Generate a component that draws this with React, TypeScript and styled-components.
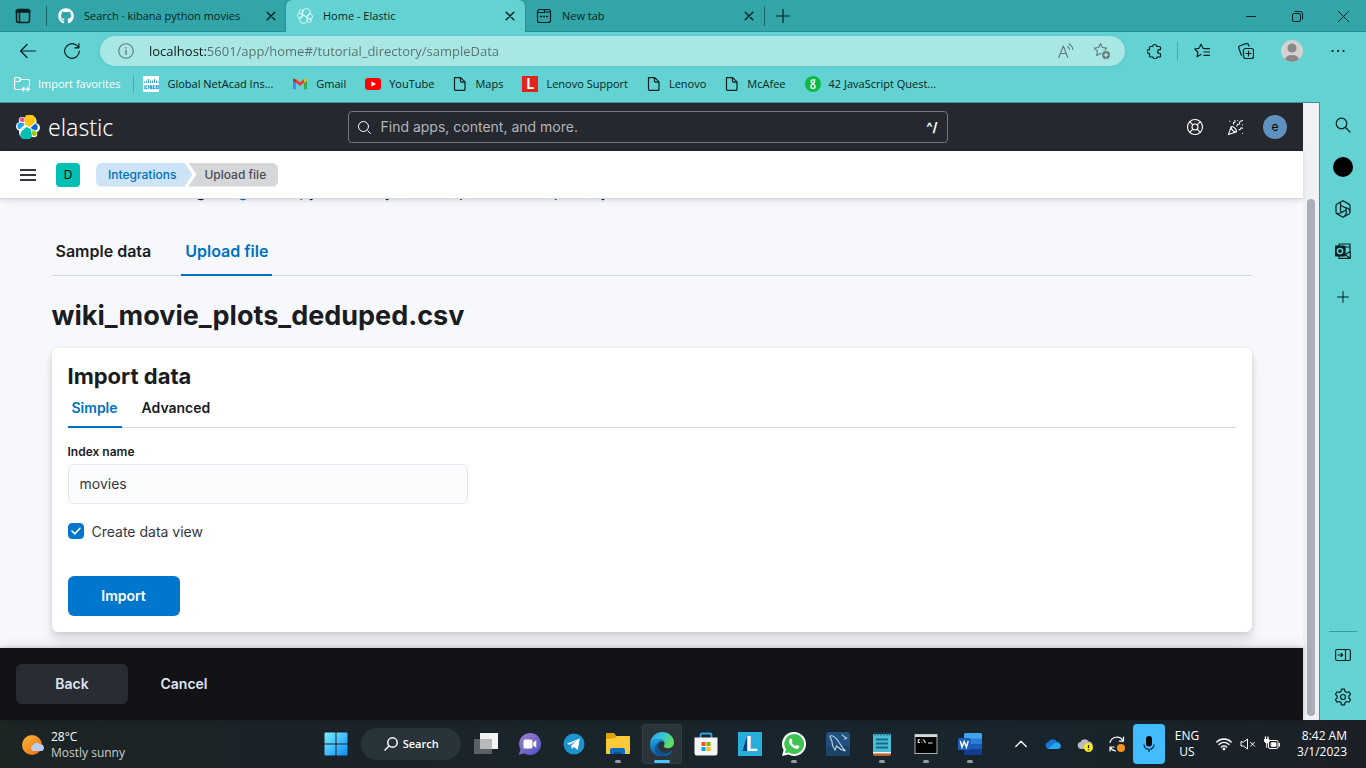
import React, { useState } from "react";
import styled, { createGlobalStyle, css } from "styled-components";
import { LifeBuoy, PartyPopper } from "lucide-react";
import { FaGithub } from "react-icons/fa";

const chromeFont = `"Open Sans", "Noto Sans", sans-serif`;
const teal = "#62d2d2";
const ink = "#0b1f20";

const GlobalStyle = createGlobalStyle`
  * { box-sizing: border-box; }
  body { margin: 0; font-family: Inter, sans-serif; background: ${teal}; }
  button, input { font: inherit; color: inherit; }
  button { border: 0; padding: 0; background: none; cursor: pointer; }
  a { color: inherit; text-decoration: none; }
  h1, h2, p, ul, ol { margin: 0; padding: 0; }
  svg { display: block; flex: none; }
`;

const Desktop = styled.div`
  min-height: 100vh;
  display: flex;
  flex-direction: column;
`;

/* ---------- browser frame ---------- */

const TabStrip = styled.div`
  height: 32px;
  display: flex;
  align-items: stretch;
  background: #31a5a8;
  box-shadow: inset 0 -1px 0 #2a8f92;
  color: ${ink};
  font: 11px/16px ${chromeFont};
`;

const TabActions = styled.button`
  width: 46px;
  display: grid;
  place-items: center;
`;

const Rule = styled.span<{ $h?: number; $color?: string; $pull?: boolean }>`
  flex: none;
  align-self: center;
  width: 1px;
  height: ${(p) => p.$h ?? 20}px;
  margin-right: ${(p) => (p.$pull ? "-10px" : 0)};
  background: ${(p) => p.$color ?? "#1c6668"};
`;

const BrowserTab = styled.div<{ $active?: boolean }>`
  flex: 0 1 239px;
  min-width: 0;
  display: flex;
  align-items: center;
  padding: 0 8px 0 11px;
  ${(p) =>
    p.$active &&
    css`
      background: ${teal};
      border-radius: 6px 6px 0 0;
      box-shadow: 0 0 2px #1c6668;
      clip-path: inset(0 -3px 0 -3px);
    `}
`;

const TabTitle = styled.button`
  flex: 1;
  min-width: 0;
  display: flex;
  align-items: center;
  gap: 10px;
  text-align: left;
  white-space: nowrap;
`;

const IconButton = styled.button<{ $w?: number; $h?: number }>`
  flex: none;
  width: ${(p) => p.$w ?? 44}px;
  height: ${(p) => p.$h ?? 32}px;
  display: grid;
  place-items: center;
  color: inherit;
`;

const WindowButtons = styled.div`
  margin-left: auto;
  display: flex;
`;

const Toolbar = styled.div`
  height: 38px;
  padding: 0 8px 0 6px;
  display: flex;
  align-items: center;
  background: ${teal};
  color: ${ink};
`;

const AddressBar = styled.form`
  flex: 1;
  height: 30px;
  margin: 0 8px 0 6px;
  padding: 0 5px 0 18px;
  display: flex;
  align-items: center;
  border-radius: 15px;
  background: #a9e7e5;
  color: #5d7c7c;
  box-shadow: 0 0 3px #57c2c2;
`;

const AddressInput = styled.input`
  flex: 1;
  min-width: 0;
  margin-left: 15px;
  padding: 0;
  border: 0;
  outline: 0;
  font: 13px/20px ${chromeFont};
  color: transparent;
  background: linear-gradient(90deg, #0d1c1c 58px, #56706f 58px);
  background-clip: text;
  -webkit-background-clip: text;
`;

const Favorites = styled.nav`
  height: 32px;
  padding: 0 14px 4px;
  display: flex;
  align-items: center;
  gap: 19px;
  background: ${teal};
  color: ${ink};
  font: 11px/16px ${chromeFont};
`;

const Favorite = styled.a<{ $light?: boolean }>`
  display: flex;
  align-items: center;
  gap: 8px;
  white-space: nowrap;
  ${(p) => p.$light && "color: #fff; margin-right: -6px;"}
`;

const CiscoMark = styled.span`
  width: 16px;
  height: 16px;
  background: #fff;
`;

const Main = styled.div`
  flex: 1;
  display: flex;
  align-items: stretch;
`;

const Viewport = styled.div`
  flex: 1;
  min-width: 0;
  display: flex;
  border-top: 1px solid #3d9496;
  border-right: 1px solid #3d9496;
`;

const ScrollTrack = styled.div`
  width: 16px;
  padding: 96px 4px 4px;
  display: flex;
  background: #f0f1f5;
`;

const ScrollThumb = styled.div`
  flex: 1;
  border-radius: 4px;
  background: #abadb8;
`;

const EdgeSidebar = styled.aside`
  width: 46px;
  padding: 2px 0;
  display: flex;
  flex-direction: column;
  align-items: center;
  background: ${teal};
  color: ${ink};
`;

const SidebarBottom = styled.div`
  width: 28px;
  margin-top: auto;
  padding-top: 2px;
  display: flex;
  flex-direction: column;
  align-items: center;
  border-top: 1px solid #3d9a9c;
`;

/* ---------- Kibana ---------- */

const Page = styled.div`
  flex: 1;
  min-width: 0;
  display: flex;
  flex-direction: column;
  background: #f7f8fc;
  color: #1a1c21;
`;

const Header = styled.header`
  height: 48px;
  padding-right: 8px;
  display: flex;
  align-items: center;
  background: #25282f;
  color: #fff;
`;

const HeaderSide = styled.div<{ $end?: boolean }>`
  flex: 1 1 160px;
  display: flex;
  align-items: center;
  ${(p) => (p.$end ? "justify-content: flex-end;" : "padding-left: 16px;")}
`;

const Brand = styled.a`
  display: flex;
  align-items: center;
  gap: 8px;
  font: 300 23px/24px "Noto Sans", sans-serif;
`;

const SearchBox = styled.label`
  flex: 0 1 600px;
  height: 32px;
  padding: 0 9px;
  display: flex;
  align-items: center;
  gap: 10px;
  border: 1px solid #74777d;
  border-radius: 4px;
`;

const SearchInput = styled.input`
  flex: 1;
  min-width: 0;
  padding: 0 0 2px;
  border: 0;
  outline: 0;
  background: none;
  font-size: 14px;
  &::placeholder { color: #b3b5ba; opacity: 1; }
`;

const Shortcut = styled.kbd`
  font: 700 13px/16px Inter, sans-serif;
`;

const Avatar = styled.span<{ $square?: boolean }>`
  width: 24px;
  height: 24px;
  display: grid;
  place-items: center;
  border-radius: ${(p) => (p.$square ? "4px" : "50%")};
  background: ${(p) => (p.$square ? "#00bfb3" : "#6092c0")};
  color: #000;
  font-size: 12px;
  line-height: 24px;
`;

const SubHeader = styled.div`
  position: relative;
  height: 48px;
  padding-left: 8px;
  display: flex;
  align-items: center;
  gap: 8px;
  background: #fff;
  border-bottom: 1px solid #d3dae6;
  box-shadow: 0 1px 4px rgba(0, 0, 0, 0.1), 0 3px 8px rgba(0, 0, 0, 0.04);
`;

const Crumbs = styled.ol`
  display: flex;
  margin-left: 8px;
  list-style: none;
  font-size: 12px;
  font-weight: 500;
  line-height: 24px;
`;

const Crumb = styled.li<{ $current?: boolean }>`
  height: 24px;
  ${(p) =>
    p.$current
      ? css`
          margin-left: -4px;
          padding: 0 12px 0 16px;
          border-radius: 0 6px 6px 0;
          background: #d6d7d9;
          color: #4b4e57;
          clip-path: polygon(0 0, 100% 0, 100% 100%, 0 100%, 8px 50%);
        `
      : css`
          padding: 0 16px 0 12px;
          border-radius: 6px 0 0 6px;
          background: #cce4f5;
          color: #0071c2;
          clip-path: polygon(0 0, calc(100% - 8px) 0, 100% 50%, calc(100% - 8px) 100%, 0 100%);
        `}
`;

const Content = styled.main`
  width: 100%;
  max-width: 1248px;
  margin: 0 auto;
  padding: 0 24px 16px;
`;

const Intro = styled.p`
  height: 2px;
  margin-bottom: 27px;
  display: flex;
  align-items: flex-end;
  overflow: hidden;
  font-size: 16px;
  line-height: 20px;
  white-space: pre;
  a { color: #0071c2; }
`;

const Tabs = styled.div<{ $large?: boolean }>`
  display: flex;
  gap: ${(p) => (p.$large ? 26 : 16)}px;
  font-size: ${(p) => (p.$large ? 16 : 14)}px;
  line-height: ${(p) => (p.$large ? 46 : 40)}px;
  box-shadow: inset 0 -1px 0 #d3dae6;
`;

const Tab = styled.button<{ $active?: boolean; $large?: boolean }>`
  padding: ${(p) => (p.$large ? "0 4px 2px" : "0 4px")};
  font-weight: 600;
  line-height: inherit;
  color: ${(p) => (p.$active ? "#0071c2" : "#1a1c21")};
  ${(p) => p.$active && "box-shadow: inset 0 -2px 0 #0071c2;"}
`;

const FileName = styled.h1`
  margin: 24px 0 16px;
  font-size: 27px;
  font-weight: 700;
  line-height: 32px;
`;

const Panel = styled.form`
  padding: 16px;
  border-radius: 6px;
  background: #fff;
  box-shadow: 0 1px 4px rgba(0, 0, 0, 0.08), 0 3px 8px rgba(0, 0, 0, 0.06),
    0 6px 12px rgba(0, 0, 0, 0.05), 0 15px 15px rgba(0, 0, 0, 0.04);
`;

const PanelTitle = styled.h2`
  font-size: 22px;
  font-weight: 700;
  line-height: 24px;
`;

const FieldLabel = styled.label`
  display: block;
  margin: 16px 0 4px;
  font-size: 12px;
  font-weight: 600;
  line-height: 16px;
`;

const TextField = styled.input`
  display: block;
  width: 100%;
  max-width: 400px;
  height: 40px;
  padding: 0 11px 2px;
  border: 1px solid #e3e6ef;
  border-radius: 6px;
  outline: 0;
  background: #fbfcfd;
  color: #343741;
  font-size: 14px;
`;

const CheckRow = styled.label`
  height: 24px;
  margin: 16px 0 32px;
  display: flex;
  align-items: center;
  gap: 8px;
  color: #343741;
  font-size: 14px;
  line-height: 24px;
`;

const CheckBox = styled.span`
  display: grid;
  place-items: center;
  padding-bottom: 2px;
  > * { grid-area: 1 / 1; }
  input {
    appearance: none;
    width: 16px;
    height: 16px;
    margin: 0;
    border: 1px solid #0077cc;
    border-radius: 4px;
    background: #fff;
  }
  input:checked { background: #0077cc; }
  svg { pointer-events: none; }
`;

const Button = styled.button<{ $kind: "primary" | "dark" | "plain" }>`
  width: 112px;
  height: 40px;
  padding-bottom: 2px;
  border-radius: 6px;
  font-size: 14px;
  font-weight: 600;
  color: ${(p) => (p.$kind === "primary" ? "#fff" : "#dfe5ef")};
  background: ${(p) => ({ primary: "#0077cc", dark: "#2a2c34", plain: "transparent" })[p.$kind]};
`;

const BottomBar = styled.footer`
  position: relative;
  margin-top: auto;
  padding: 16px;
  display: flex;
  background: #131317;
  box-shadow: 0 -1px 4px rgba(0, 0, 0, 0.16), 0 -4px 12px rgba(0, 0, 0, 0.06);
`;

/* ---------- Windows taskbar ---------- */

const Taskbar = styled.div`
  height: 48px;
  display: flex;
  align-items: center;
  background: linear-gradient(90deg, #1c2424, #1a2329 25%, #18252d 70%, #1b2026);
  color: #fff;
  font: 12px/16px ${chromeFont};
`;

const Weather = styled.button`
  flex: 0 0 23%;
  padding: 2px 0 0 21px;
  display: flex;
  align-items: center;
  gap: 6px;
  text-align: left;
  span { color: #c9cdce; }
`;

const Stack = styled.div`
  display: flex;
  flex-direction: column;
`;

const Apps = styled.div`
  margin-left: 2px;
  display: flex;
  align-items: center;
  gap: 4px;
`;

const AppButton = styled.button<{ $running?: boolean; $active?: boolean }>`
  position: relative;
  width: 40px;
  height: 40px;
  display: grid;
  place-items: center;
  border-radius: 4px;
  ${(p) => p.$active && "background: #2b343b; box-shadow: inset 0 0 0 1px #333c43;"}
  ${(p) =>
    (p.$running || p.$active) &&
    css`
      &::after {
        content: "";
        position: absolute;
        bottom: 1px;
        left: 50%;
        width: ${p.$active ? 16 : 6}px;
        height: 3px;
        transform: translateX(-50%);
        border-radius: 2px;
        background: ${p.$active ? "#4cc2ff" : "#989ca0"};
      }
    `}
`;

const SearchPill = styled.button`
  width: 100px;
  height: 32px;
  margin: 0 1px;
  display: flex;
  align-items: center;
  justify-content: center;
  gap: 5px;
  border-radius: 16px;
  background: #29333a;
  font-size: 11px;
  font-weight: 600;
`;

const Tray = styled.div`
  margin-left: auto;
  padding-right: 19px;
  display: flex;
  align-items: center;
`;

const MicTile = styled.button`
  width: 32px;
  height: 40px;
  display: grid;
  place-items: center;
  border-radius: 4px;
  background: #43bcff;
`;

const Language = styled.button`
  width: 44px;
  text-align: center;
`;

const Status = styled.button`
  width: 76px;
  display: flex;
  align-items: center;
  justify-content: space-between;
  padding: 0 5px 0 7px;
`;

const Clock = styled.button`
  width: 62px;
  text-align: right;
`;

/* ---------- icons ---------- */

type IconProps = { s?: number; box?: number; w?: number; children: React.ReactNode };

const Line = ({ s = 16, box = 16, w = 1, children }: IconProps) => (
  <svg width={s} height={s} viewBox={`0 0 ${box} ${box}`} fill="none" stroke="currentColor"
    strokeWidth={w} strokeLinecap="round" strokeLinejoin="round" aria-hidden="true">
    {children}
  </svg>
);

const Art = ({ s = 24, box = 24, children }: IconProps) => (
  <svg width={s} height={s} viewBox={`0 0 ${box} ${box}`} aria-hidden="true">{children}</svg>
);

const CloseX = () => <Line s={10} box={10} w={1.4}><path d="M1.2 1.2l7.6 7.6M8.800 1.200l-7.600 7.600" /></Line>;

const DocIcon = () => (
  <Line s={14} box={14} w={1.2}>
    <path d="M1.500 0.600h6.200l4.300 4.300v7.500a1 1 0 0 1-1 1H2.500a1 1 0 0 1-1-1zM7.500 .8v3.300a1 1 0 0 0 1 1h3.300" />
  </Line>
);

const ElasticLogo = () => (
  <Art>
    <g fill="#fff">
      <circle cx="14" cy="6.600" r="6.600" /><circle cx="9.700" cy="17.300" r="6.700" />
      <circle cx="6.200" cy="5.300" r="3.400" /><circle cx="4.400" cy="11.300" r="4.400" />
      <circle cx="19.500" cy="12.700" r="4.500" /><circle cx="17.800" cy="18.700" r="3.500" />
      <circle cx="12" cy="12" r="6" />
    </g>
    <path d="M9.200 9.800l4.600 2.100 4.700-4.100A5.600 5.600 0 1 0 8.200 5.300z" fill="#fec514" />
    <path d="M14.800 14.100l-4.600-2.100-4.600 4.200A5.700 5.700 0 1 0 15.700 18.700z" fill="#00bfb3" />
    <path d="M4.500 6.600l3.100.7.700-3.500A2.400 2.400 0 1 0 4.500 6.600z" fill="#f04e98" />
    <path d="M4.200 7.400l3.600.8.700 1.600-4.400 4.100-.8.400A3.700 3.700 0 0 1 4.200 7.400z" fill="#1ba9f5" />
    <path d="M19.200 8.500l-4.300 3.900.8 1.500 4.100 1.500A3.800 3.800 0 0 0 19.200 8.500z" fill="#0b64dd" />
    <path d="M19.500 16.200l-3-1.100-.7 3.700A2.500 2.500 0 1 0 19.500 16.200z" fill="#93c90e" />
  </Art>
);

const ElasticOutline = () => (
  <Line s={16} box={24} w={1.500}>
    <g stroke="#dcf7f6">
      <circle cx="14" cy="6.600" r="5.800" /><circle cx="9.700" cy="17.300" r="5.900" />
      <circle cx="6" cy="5.500" r="3" /><circle cx="4.500" cy="11.500" r="3.800" />
      <circle cx="19.300" cy="12.700" r="4" /><circle cx="18" cy="18.700" r="3.100" />
    </g>
  </Line>
);

const GmailIcon = () => (
  <Art s={16} box={16}>
    <path d="M1 4.500v8.700h2.900V6.800z" fill="#4285f4" />
    <path d="M15 4.500v8.700h-2.900V6.800z" fill="#34a853" />
    <path d="M1 4.500C1 2.600 3 2.300 4 3.100L8 6.200l4-3.100v3.700L8 10 3.900 6.800z" fill="#ea4335" />
    <path d="M12.100 3.100C13 2.300 15 2.600 15 4.500l-2.900 2.300z" fill="#fbbc04" />
    <path d="M1 4.500c0-.9.400-1.500 1-1.700l1.900 1.400v2.600z" fill="#c5221f" />
  </Art>
);

const YouTubeIcon = () => (
  <Art s={16} box={16}>
    <rect y="2" width="16" height="12" rx="3" fill="#f00" /><path d="M6.300 5.300v5.400L11 8z" fill="#fff" />
  </Art>
);

const CiscoIcon = () => (
  <CiscoMark>
    <svg width="16" height="16" viewBox="0 0 16 16" aria-hidden="true">
      <g stroke="#3aa6d8" strokeWidth="1">
        <path d="M1.500 5.500v1.500M3.500 4.500v2.500M5.500 3v4M7.500 4.500v2.500M9.500 4.500v2.500M11.500 3v4M13.500 4.500v2.500M15.300 5.500v1.500" />
      </g>
      <g fill="none" stroke="#3aa6d8" strokeWidth="1.300">
        <path d="M4 9.800H2v2.700h2M5.500 9.200v4M9 9.800H7.300v1.300h1.400v1.400H7M12 9.800h-1.600v2.700H12" />
        <rect x="13.200" y="9.800" width="2" height="2.700" />
      </g>
    </svg>
  </CiscoMark>
);

const LenovoMark = styled.span`
  width: 16px;
  height: 16px;
  display: grid;
  place-items: center;
  background: #e2231a;
  color: #fff;
  font: 700 14px/16px Roboto, sans-serif;
`;

const GreenIcon = () => (
  <Art s={16} box={16}>
    <circle cx="8" cy="8" r="8" fill="#0cba46" />
    <g fill="none" stroke="#fff" strokeWidth="1.300">
      <circle cx="7.800" cy="5.500" r="1.700" /><circle cx="8" cy="10.400" r="2" /><path d="M9 4.200l1.300-.6" />
    </g>
  </Art>
);

const StarPath = "M7.500 1.500l1.900 4 4.300.6-3.100 3 .8 4.400-3.900-2.100-3.900 2.100.8-4.400-3.100-3 4.300-.6z";

const WindowsLogo = () => (
  <Art>
    <defs>
      <linearGradient id="win" x1="0" y1="0" x2="1" y2="1">
        <stop offset="0" stopColor="#7df0ff" /><stop offset="1" stopColor="#0a8df5" />
      </linearGradient>
    </defs>
    <path fill="url(#win)" d="M.5 1.500A1 1 0 0 1 1.500.5H11.500V11.500H.5zM12.500.5H22.500a1 1 0 0 1 1 1V11.500H12.500zM.5 12.500H11.500V23.500H1.500a1 1 0 0 1-1-1zM12.500 12.500H23.500V22.500a1 1 0 0 1-1 1H12.500z" />
  </Art>
);

const SunCloud = () => (
  <Art>
    <defs><linearGradient id="sun" x1="0" y1="0" x2="1" y2="1"><stop offset="0" stopColor="#f9b93a" /><stop offset="1" stopColor="#ee6a10" /></linearGradient></defs>
    <circle cx="11" cy="12" r="10" fill="url(#sun)" />
    <path d="M12 18a3.400 3.400 0 0 1 .4-6.300 4 4 0 0 1 6.600-.3 3.500 3.500 0 0 1 2 6.600z" fill="#b9cdf3" />
  </Art>
);

const EdgeIcon = () => (
  <Art>
    <defs>
      <linearGradient id="edgeTop" x1="0" y1="0" x2="1" y2=".4"><stop offset="0" stopColor="#2a9fe8" /><stop offset=".55" stopColor="#35c5d8" /><stop offset="1" stopColor="#62de5b" /></linearGradient>
      <linearGradient id="edgeLow" x1="0" y1="0" x2="0" y2="1"><stop offset="0" stopColor="#1aa0e2" /><stop offset="1" stopColor="#0c59a4" /></linearGradient>
    </defs>
    <path d="M0 12C.4 5 5.600 0 12 0c7 0 12 5 12 10.400 0 3.400-2.600 5.800-6 5.800-3 0-4.300-1.200-4.300-1.900 0-.5.900-.9.900-2.600C14.600 9 12 7 8.800 7 4.300 7 1 9.300 0 12z" fill="url(#edgeTop)" />
    <path d="M0 12C1 9 4.300 7 8.800 7c2.500 0 4.600 1.300 5.400 3-3-2-6.200.5-6.200 4.200 0 4.800 4.600 8 9.500 6.800 1.500-.4 3-1.200 3.800-2 .6-.4 1 0 .7.500A12 12 0 0 1 0 12z" fill="url(#edgeLow)" />
    <path d="M8.500 23.400C3.500 20.500 3 13.500 8.800 10c1.500-.9 3.800-1 5.400 0-3-1.200-6.200 1-6.200 4.200 0 4.800 4.600 8 9.500 6.800-2.200 2.200-5.600 3.300-9 2.400z" fill="#114a8b" opacity=".75" />
  </Art>
);

const AppIcons = {
  taskView: <Art><rect y="7" width="18" height="15" fill="#5c6064" /><rect x="6" y="1" width="18" height="16" fill="#f2f2f2" /><rect x="6" y="7" width="12" height="10" fill="#b7b9ba" /></Art>,
  chat: (
    <Art>
      <defs><linearGradient id="chat" x1="0" y1="0" x2="1" y2="1"><stop offset="0" stopColor="#a583cc" /><stop offset="1" stopColor="#4a4fc4" /></linearGradient></defs>
      <path d="M12 1a11 11 0 1 1-5.600 20.400L.8 22.700l1.800-5.200A11 11 0 0 1 12 1z" fill="url(#chat)" />
      <rect x="5.500" y="7.500" width="9" height="9" rx="1.500" fill="#fff" /><path d="M15.300 10.600l3-2.500v7.800l-3-2.500z" fill="#fff" />
    </Art>
  ),
  telegram: <Art><circle cx="12" cy="12" r="10.500" fill="#1b93cf" /><path d="M4.800 11.800l13-5.200-2 11.400-4-3-2 2-.6-3.600 5.600-5-7 4.300z" fill="#fff" /></Art>,
  explorer: (
    <Art>
      <path d="M0 2a1 1 0 0 1 1-1h7l2 2.500V8H0z" fill="#e0a106" /><path d="M0 7l9-1 1.500-2H23a1 1 0 0 1 1 1v16a1 1 0 0 1-1 1H1a1 1 0 0 1-1-1z" fill="#fcc93a" />
      <path d="M4 22v-4a2 2 0 0 1 2-2h11a2 2 0 0 1 2 2v4z" fill="#0f6cbd" /><path d="M8 22v-2h7v2z" fill="#0b4f94" />
    </Art>
  ),
  store: (
    <Art>
      <path d="M6.500 6V3a1.500 1.500 0 0 1 1.500-1.500h8A1.500 1.500 0 0 1 17.500 3v3" fill="none" stroke="#28a8ea" strokeWidth="1.800" />
      <path d="M.5 5.500h23V21a2.500 2.500 0 0 1-2.500 2.500H3A2.500 2.500 0 0 1 .5 21z" fill="#f4f4f4" />
      <path d="M7.500 10h4v4h-4z" fill="#f25022" /><path d="M12.500 10h4v4h-4z" fill="#7fba00" /><path d="M7.500 15h4v4h-4z" fill="#00a4ef" /><path d="M12.500 15h4v4h-4z" fill="#ffb900" />
    </Art>
  ),
  vantage: (
    <Art>
      <rect width="24" height="24" fill="#27aedb" /><path d="M9 4L4.500 19H9z" fill="#0b3f73" />
      <text x="8" y="19" fill="#fff" fontFamily="Roboto, sans-serif" fontWeight="700" fontSize="21">L</text>
    </Art>
  ),
  whatsapp: (
    <Art>
      <path d="M12 0a12 12 0 1 1-5.600 22.600L0 24l1.600-6A12 12 0 0 1 12 0z" fill="#fff" /><path d="M12 2a10 10 0 1 1-5.200 18.500L2.900 21.300 4 17.600A10 10 0 0 1 12 2z" fill="#3fc351" />
      <path d="M8.500 6.500c.6-.3 1 0 1.200.5l.8 1.900c.2.600-.9 1.300-.8 1.700.6 1.500 2 2.900 3.600 3.400.5.100 1.100-1.300 1.600-1.100l2.100 1c.8.400.1 1.800-.4 2.300-1.400 1.200-3.400.7-5.300-.5-1.500-.9-3-2.500-3.800-4.100-1-2-.4-4.300 1-5.100z" fill="#fff" />
    </Art>
  ),
  mysql: (
    <Art>
      <rect width="24" height="24" rx="3" fill="#21527f" /><rect y="14" width="24" height="10" rx="3" fill="#1c4468" />
      <path d="M4 4c3-1 6 2 8.500 5.500S16 16 19.500 19M4 4c0 2 2 3.500 2 6s1 5 3 8l1.500-4c1.500 1 3 4 9 5M16 2.500c1 1.500 2 3 4.500 3.500L18.500 7.500" fill="none" stroke="#c5d9e8" strokeWidth="1.100" />
    </Art>
  ),
  notepad: (
    <Art>
      <path d="M3 2h18v19H3z" fill="#4cbcd6" /><path d="M3 20h18v2a2 2 0 0 1-2 2H5a2 2 0 0 1-2-2z" fill="#b8642b" /><path d="M3 20h18v1.500H3z" fill="#f3f3f3" />
      <path d="M5 0v3.500M8 0v3.500M11 0v3.500M14 0v3.500M17 0v3.500M19.500 0v3.500" stroke="#12586b" strokeWidth="1.200" /><path d="M6 7.500h12M6 11.500h12M6 15.500h12" stroke="#136c82" strokeWidth="1.800" />
    </Art>
  ),
  cmd: (
    <Art>
      <rect x="1" y="2.500" width="22" height="19" fill="#050505" stroke="#a9adb0" strokeWidth="1" /><path d="M1 2.500h22V5H1z" fill="#d7dadb" />
      <path d="M6 7.800H4.300v2.700H6M8 8v.5M8 10v.5M9.500 7.500l2 3.500M14 11h4.500" fill="none" stroke="#e8e8e8" strokeWidth="1.100" />
    </Art>
  ),
  word: (
    <Art>
      <path d="M6 2.500A1.500 1.500 0 0 1 7.500 1h15A1.500 1.500 0 0 1 24 2.500V7H6z" fill="#41a5ee" /><path d="M6 6.500h18V12H6z" fill="#2b7cd3" /><path d="M6 12h18v5.500H6z" fill="#185abd" />
      <path d="M6 17.500h18v4a1.500 1.500 0 0 1-1.500 1.500h-15A1.500 1.500 0 0 1 6 21.500z" fill="#103f91" /><rect y="6" width="12.500" height="12" rx="1.200" fill="#1a5dbe" />
      <path d="M2.300 9l1.700 6.200L6.200 9.600l2.200 5.600L10.200 9" fill="none" stroke="#fff" strokeWidth="1.500" />
    </Art>
  ),
};

/* ---------- page parts ---------- */

function BrowserTop() {
  const [url, setUrl] = useState("localhost:5601/app/home#/tutorial_directory/sampleData");
  return (
    <>
      <TabStrip>
        <TabActions aria-label="Tab actions">
          <Line w={1.500}><rect x="1.500" y="1.500" width="13" height="13" rx="2" /><path d="M2 3.200h12" strokeWidth="3" /><path d="M4.500 5v9" /></Line>
        </TabActions>
        <Rule />
        <BrowserTab>
          <TabTitle><FaGithub size={16} color="#fff" />Search · kibana python movies</TabTitle>
          <IconButton $w={14} aria-label="Close tab"><CloseX /></IconButton>
        </BrowserTab>
        <BrowserTab $active>
          <TabTitle><ElasticOutline />Home - Elastic</TabTitle>
          <IconButton $w={14} aria-label="Close tab"><CloseX /></IconButton>
        </BrowserTab>
        <BrowserTab>
          <TabTitle>
            <Line w={1.200}><path d="M1.500 4.500v8a2 2 0 0 0 2 2h9a2 2 0 0 0 2-2V4.500M1.500 4.500v-1a2 2 0 0 1 2-2h4.500M8 1.500l1 2.500h5.500M14.500 4.500v-1a2 2 0 0 0-2-2H8M1.500 4.500H8.500" /><path d="M4.500 8.500h.8M7.600 8.500h.8M10.700 8.500h.8" strokeWidth="1.600" /></Line>
            New tab
          </TabTitle>
          <IconButton $w={14} aria-label="Close tab"><CloseX /></IconButton>
        </BrowserTab>
        <Rule />
        <IconButton $w={36} aria-label="New tab"><Line s={14} box={14} w={1.200}><path d="M7 .5v13M.5 7h13" /></Line></IconButton>
        <WindowButtons>
          <IconButton $w={46} aria-label="Minimize"><Line s={10} box={10}><path d="M.5 5.500h9" /></Line></IconButton>
          <IconButton $w={46} aria-label="Restore"><Line s={11} box={11}><rect x=".5" y="2.500" width="8" height="8" rx="1.500" /><path d="M3 .5h5.500a2 2 0 0 1 2 2V8" /></Line></IconButton>
          <IconButton $w={46} aria-label="Close"><Line s={11} box={11}><path d="M.5.5l10 10M10.500.5l-10 10" /></Line></IconButton>
        </WindowButtons>
      </TabStrip>

      <Toolbar>
        <IconButton aria-label="Back"><Line w={1.200}><path d="M15.500 8H.7M7 1.500L.6 8 7 14.500" /></Line></IconButton>
        <IconButton aria-label="Refresh"><Line w={1.200}><path d="M15.300 8A7.300 7.300 0 1 1 12.700 2.400L14.800 4.600M14.900.6v4.200h-4.200" /></Line></IconButton>
        <AddressBar onSubmit={(e) => e.preventDefault()}>
          <Line w={1.100}><circle cx="8" cy="8" r="7.300" /><path d="M8 7.300v4M8 4.700v.2" strokeWidth="1.400" /></Line>
          <AddressInput aria-label="Address" value={url} onChange={(e) => setUrl(e.target.value)} />
          <IconButton $w={36} type="button" aria-label="Read aloud"><Line w={1.100}><path d="M.8 14.500L5.300 3l4.500 11.500M2.400 10.500h5.800M9.500 3.500a4 4 0 0 1 2 3M11 1a7 7 0 0 1 3.800 5.500" /></Line></IconButton>
          <IconButton $w={36} type="button" aria-label="Add to favorites">
            <Line s={18} box={18} w={1.100}><path d={StarPath} /><circle cx="13" cy="13" r="4.500" fill="currentColor" stroke="#a9e7e5" /><path d="M13 11v4M11 13h4" stroke="#d9f4f3" /></Line>
          </IconButton>
        </AddressBar>
        <IconButton aria-label="Extensions">
          <Line w={1.200}><path d="M2.500 4.500a1 1 0 0 1 1-1h2.200a2 2 0 1 1 4 0h2.800a1 1 0 0 1 1 1v2.200h-1a1.900 1.900 0 0 0 0 3.800h1v2.500a1 1 0 0 1-1 1H10a2 2 0 0 1-4 0H3.500a1 1 0 0 1-1-1v-2.700a1.900 1.900 0 1 1 0-3.600z" /></Line>
        </IconButton>
        <Rule $color="#48a9aa" $h={18} />
        <IconButton $w={48} aria-label="Favorites"><Line w={1.200}><path d="M10.500 5.500l-1.400-.2L7 1.200 5 5.300l-4.300.7 3.100 3-.7 4.600L7 11.500M10 5.700h5.500M10 9h5.500M10 12.300h5.500" /></Line></IconButton>
        <IconButton $w={40} aria-label="Collections">
          <Line w={1.200}><rect x="5.500" y="5.500" width="10" height="10" rx="2" /><path d="M10.500 8v5M8 10.500h5M3.500 12.200L.8 5.200a2 2 0 0 1 1.200-2.500L8 .6a2 2 0 0 1 2.500 1.300l.5 1.300" /></Line>
        </IconButton>
        <IconButton $w={52} aria-label="Profile">
          <Art s={22} box={22}><circle cx="11" cy="11" r="11" fill="#d4d2d0" /><circle cx="11" cy="8" r="4.600" fill="#8a8886" /><path d="M3.800 19.300a7.500 6 0 0 1 14.400 0 11 11 0 0 1-14.400 0z" fill="#8a8886" /></Art>
        </IconButton>
        <IconButton $w={40} aria-label="Settings and more"><Line w={2.200}><path d="M2.500 8h.1M8 8h.1M13.500 8h.1" /></Line></IconButton>
      </Toolbar>

      <Favorites aria-label="Favorites bar">
        <Favorite href="#" $light>
          <Line w={1.200}><path d="M6 13.500H2a1.500 1.500 0 0 1-1.500-1.500V3A1.500 1.500 0 0 1 2 1.500h3L7 3.500h7A1.500 1.500 0 0 1 15.500 5v5M.6 5.500h4.600L7 3.600M8 13.200h7.500M9.800 11.300L8 13.200l1.800 1.900M13.700 11.300l1.800 1.900-1.800 1.900" /></Line>
          Import favorites
        </Favorite>
        <Rule $color="#48a9aa" $h={16} $pull />
        <Favorite href="#"><CiscoIcon />Global NetAcad Ins...</Favorite>
        <Favorite href="#"><GmailIcon />Gmail</Favorite>
        <Favorite href="#"><YouTubeIcon />YouTube</Favorite>
        <Favorite href="#"><DocIcon />Maps</Favorite>
        <Favorite href="#"><LenovoMark aria-hidden="true">L</LenovoMark>Lenovo Support</Favorite>
        <Favorite href="#"><DocIcon />Lenovo</Favorite>
        <Favorite href="#"><DocIcon />McAfee</Favorite>
        <Favorite href="#"><GreenIcon />42 JavaScript Quest...</Favorite>
      </Favorites>
    </>
  );
}

function KibanaPage() {
  const [name, setName] = useState("movies");
  const [view, setView] = useState(true);
  return (
    <Page>
      <Header>
        <HeaderSide><Brand href="#"><ElasticLogo />elastic</Brand></HeaderSide>
        <SearchBox>
          <Line s={13} box={13}><circle cx="5.500" cy="5.500" r="5" /><path d="M9.800 9.800l2.700 2.700" /></Line>
          <SearchInput placeholder="Find apps, content, and more." aria-label="Find apps" />
          <Shortcut>^/</Shortcut>
        </SearchBox>
        <HeaderSide $end>
          <IconButton $w={40} aria-label="Help"><LifeBuoy size={18} strokeWidth={1.500} /></IconButton>
          <IconButton $w={40} aria-label="Newsfeed"><PartyPopper size={17} strokeWidth={1.500} /></IconButton>
          <IconButton $w={40} aria-label="Account"><Avatar>e</Avatar></IconButton>
        </HeaderSide>
      </Header>
      <SubHeader>
        <IconButton $w={40} aria-label="Menu"><Art s={16} box={16}><path d="M0 2h16v2H0zM0 7h16v2H0zM0 12h16v2H0z" fill="#343741" /></Art></IconButton>
        <Avatar $square>D</Avatar>
        <Crumbs>
          <Crumb><a href="#">Integrations</a></Crumb>
          <Crumb $current>Upload file</Crumb>
        </Crumbs>
      </SubHeader>
      <Content>
        <Intro>In addition to adding <a href="#">integrations</a>, you can try our sample data or upload your own data.</Intro>
        <Tabs $large role="tablist">
          <Tab $large role="tab">Sample data</Tab>
          <Tab $large role="tab" $active aria-selected>Upload file</Tab>
        </Tabs>
        <FileName>wiki_movie_plots_deduped.csv</FileName>
        <Panel onSubmit={(e) => e.preventDefault()}>
          <PanelTitle>Import data</PanelTitle>
          <Tabs role="tablist">
            <Tab type="button" role="tab" $active aria-selected>Simple</Tab>
            <Tab type="button" role="tab">Advanced</Tab>
          </Tabs>
          <FieldLabel htmlFor="index-name">Index name</FieldLabel>
          <TextField id="index-name" value={name} onChange={(e) => setName(e.target.value)} />
          <CheckRow>
            <CheckBox>
              <input type="checkbox" checked={view} onChange={(e) => setView(e.target.checked)} />
              <Art s={10} box={10}><path d="M1 5l2.800 2.800L9 2.300" fill="none" stroke="#fff" strokeWidth="1.600" strokeLinecap="round" /></Art>
            </CheckBox>
            Create data view
          </CheckRow>
          <Button $kind="primary">Import</Button>
        </Panel>
      </Content>
      <BottomBar>
        <Button $kind="dark">Back</Button>
        <Button $kind="plain">Cancel</Button>
      </BottomBar>
    </Page>
  );
}

function Sidebar() {
  return (
    <EdgeSidebar>
      <IconButton $h={42} aria-label="Search"><Line w={1.200}><circle cx="6.500" cy="6.500" r="5.300" /><path d="M10.500 10.500l4.500 4.500" /></Line></IconButton>
      <IconButton $h={42} aria-label="Discover"><Art s={20} box={20}><circle cx="10" cy="10" r="10" /></Art></IconButton>
      <IconButton $h={42} aria-label="Office">
        <Line s={18} box={18} w={1.200}><path d="M9 .8l6 3.300a2 2 0 0 1 1 1.800v6.200a2 2 0 0 1-1 1.800l-6 3.300-6-3.300a2 2 0 0 1-1-1.800V5.900a2 2 0 0 1 1-1.800zM6.500 2.300v8.200a1.500 1.500 0 0 0 2.200 1.300l2.800-1.500a1.500 1.500 0 0 0 0-2.600L6.600 5.500M11.700 7.500c2 .5 3.500 1.500 4.100 3.200M9 11.800c-2 1.300-4.500 2-6.500 1.500M9.500 17c2-1.500 3.500-3.700 2.500-7" /></Line>
      </IconButton>
      <IconButton $h={42} aria-label="Outlook">
        <Line w={1.200}><path d="M4 3V1h11v8M4 13v2.300h11.300V8.500L10 11.500M10 4h5M10.500 12l4.800 3.200" /><rect x="0" y="3" width="10" height="10" rx="1" fill="currentColor" /><circle cx="5" cy="8" r="2.600" stroke={teal} strokeWidth="1.500" /></Line>
      </IconButton>
      <IconButton $h={50} aria-label="Customize"><Line s={12} box={12}><path d="M6 .5v11M.5 6h11" /></Line></IconButton>
      <SidebarBottom>
        <IconButton $h={42} aria-label="Hide sidebar"><Line w={1.200}><rect x=".6" y="2.500" width="14.800" height="11" rx="1.500" /><path d="M10.500 2.500v11M3 8h4.500M6 6.300L7.700 8 6 9.700" /></Line></IconButton>
        <IconButton $h={42} aria-label="Settings">
          <Line s={18} box={18} w={1.200}><circle cx="9" cy="9" r="2.500" /><path d="M7.500 1.200h3l.5 2.300 1.700 1 2.300-.7 1.500 2.500L14.900 8v2l1.600 1.700-1.500 2.500-2.300-.7-1.700 1-.5 2.300h-3L7 14.500l-1.700-1-2.300.7-1.500-2.500L3.100 10V8L1.500 6.300 3 3.800l2.300.7 1.700-1z" /></Line>
        </IconButton>
      </SidebarBottom>
    </EdgeSidebar>
  );
}

const CloudPath = "M4 13a3.500 3.500 0 0 1-.6-6.900 4.600 4.600 0 0 1 8.300-.6A3.800 3.800 0 0 1 12.500 13z";

function WindowsTaskbar() {
  return (
    <Taskbar>
      <Weather><SunCloud /><Stack>28°C<span>Mostly sunny</span></Stack></Weather>
      <Apps>
        <AppButton aria-label="Start"><WindowsLogo /></AppButton>
        <SearchPill><Line s={14} box={14} w={1.500}><circle cx="8.500" cy="5.500" r="4.700" /><path d="M5 9L1 13" /></Line>Search</SearchPill>
        <AppButton aria-label="Task view">{AppIcons.taskView}</AppButton>
        <AppButton aria-label="Chat">{AppIcons.chat}</AppButton>
        <AppButton aria-label="Telegram">{AppIcons.telegram}</AppButton>
        <AppButton aria-label="File Explorer" $running>{AppIcons.explorer}</AppButton>
        <AppButton aria-label="Edge" $active><EdgeIcon /></AppButton>
        <AppButton aria-label="Store">{AppIcons.store}</AppButton>
        <AppButton aria-label="Lenovo Vantage">{AppIcons.vantage}</AppButton>
        <AppButton aria-label="WhatsApp" $running>{AppIcons.whatsapp}</AppButton>
        <AppButton aria-label="MySQL Workbench">{AppIcons.mysql}</AppButton>
        <AppButton aria-label="Notepad" $running>{AppIcons.notepad}</AppButton>
        <AppButton aria-label="Command Prompt" $running>{AppIcons.cmd}</AppButton>
        <AppButton aria-label="Word" $running>{AppIcons.word}</AppButton>
      </Apps>
      <Tray>
        <IconButton $w={32} aria-label="Hidden icons"><Line s={12} box={12} w={1.300}><path d="M.8 8.500L6 3.300l5.200 5.200" /></Line></IconButton>
        <IconButton $w={32} aria-label="OneDrive"><Art s={16} box={16}><path d={CloudPath} fill="#1478d4" /><path d="M3 13l6-5.500c2.500-1 6.800 0 6.800 2.500 0 2-1.500 3-3.300 3z" fill="#28a8ea" /></Art></IconButton>
        <IconButton $w={32} aria-label="OneDrive warning"><Art s={16} box={16}><path d={CloudPath} fill="#b9bbbd" /><circle cx="11.500" cy="11.500" r="4.500" fill="#f8e71c" /><path d="M11.500 9v3M11.500 13.200v1" stroke="#222" strokeWidth="1.200" /></Art></IconButton>
        <IconButton $w={32} aria-label="Updates"><Line w={1.200}><path d="M1 6.500a7 7 0 0 1 13-1.500M14.500 1v4.200h-4M1 15v-4h4M1.200 11a7 7 0 0 0 5.300 4" /><circle cx="12" cy="12" r="4" fill="#f7941d" stroke="none" /></Line></IconButton>
        <MicTile aria-label="Microphone"><Art s={18} box={18}><rect x="6" y="1" width="6" height="10.500" rx="3" fill="#0a0a0a" /><path d="M4 9.500a5 5 0 0 0 10 0M9 14.500v2.500" fill="none" stroke="#0a2a40" strokeWidth="1.200" /></Art></MicTile>
        <Language><Stack>ENG<span>US</span></Stack></Language>
        <Status aria-label="Network, sound and battery">
          <Line w={1.300}><path d="M.8 6a10.200 10.200 0 0 1 14.400 0M3 8.500a7 7 0 0 1 10 0M5.300 11a3.800 3.800 0 0 1 5.400 0" /><circle cx="8" cy="13" r=".8" fill="currentColor" /></Line>
          <Line><path d="M1 6v4h2.500L7.500 13V3L3.500 6zM10.500 6.200l4 4M14.500 6.200l-4 4" /></Line>
          <Line><rect x="4.500" y="4.500" width="9.500" height="8" rx="1.500" /><path d="M7.500 6.800h4.500v3.500H7.500z" fill="currentColor" /><path d="M15.300 7.500v2.500M1.500 1v3M4 1v3" strokeWidth="1.300" /><path d="M.5 3.500h4.500v2L3.500 7h-1.500L.5 5.500z" fill="currentColor" /><path d="M2.700 7v4.500" /></Line>
        </Status>
        <Clock>8:42 AM<br />3/1/2023</Clock>
      </Tray>
    </Taskbar>
  );
}

export default function App() {
  return (
    <Desktop>
      <GlobalStyle />
      <BrowserTop />
      <Main>
        <Viewport>
          <KibanaPage />
          <ScrollTrack><ScrollThumb /></ScrollTrack>
        </Viewport>
        <Sidebar />
      </Main>
      <WindowsTaskbar />
    </Desktop>
  );
}
